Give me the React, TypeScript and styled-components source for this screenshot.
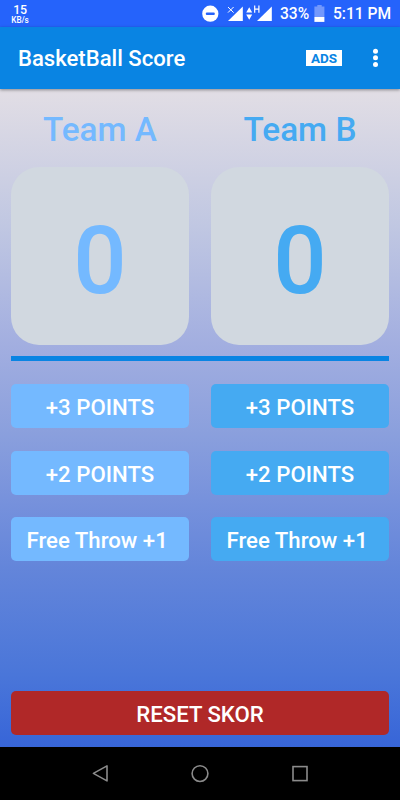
import React, { useState } from "react";
import styled, { createGlobalStyle } from "styled-components";

const GlobalStyle = createGlobalStyle`
  * { box-sizing: border-box; }
  body { margin: 0; background: #000; }
  button { font: inherit; border: 0; padding: 0; color: inherit; cursor: pointer; }
`;

const Screen = styled.div`
  width: 400px;
  height: 800px;
  display: flex;
  flex-direction: column;
  font-family: Roboto, sans-serif;
  font-weight: 500;
  color: #fff;
  overflow: hidden;
`;

const StatusBar = styled.header`
  height: 27px;
  flex: none;
  background: #2563fb;
  display: flex;
  align-items: center;
  justify-content: space-between;
  padding: 0 9px 0 11px;
`;

const NetSpeed = styled.div`
  width: 18px;
  display: flex;
  flex-direction: column;
  align-items: center;
`;

const SpeedValue = styled.span`
  font-size: 12.4px;
  line-height: 12px;
  letter-spacing: -0.3px;
`;

const SpeedUnit = styled.span`
  font-size: 8.2px;
  line-height: 8px;
  letter-spacing: -0.1px;
`;

const StatusRight = styled.div`
  display: flex;
  align-items: center;
  height: 27px;
`;

const Percent = styled.span`
  font-size: 15.6px;
  line-height: 27px;
  width: 34px;
  padding-top: 1px;
  white-space: nowrap;
`;

const Clock = styled.span`
  font-size: 15.6px;
  line-height: 27px;
  width: 58px;
  padding-top: 1px;
  white-space: nowrap;
`;

const Toolbar = styled.div`
  height: 62px;
  flex: none;
  background: #0984e3;
  display: flex;
  align-items: center;
  padding: 0 20px 0 18px;
  box-shadow: 0 1px 3px rgba(0, 0, 0, 0.4);
  z-index: 1;
`;

const Title = styled.h1`
  margin: 0;
  flex: 1;
  font-size: 22.1px;
  font-weight: 500;
  line-height: 26px;
`;

const AdsBadge = styled.button`
  width: 36px;
  height: 16px;
  margin: 0 29px 1px 0;
  background: #fff;
  color: #0984e3;
  font-size: 13.5px;
  font-weight: 700;
  line-height: 16px;
`;

const MenuButton = styled.button`
  display: flex;
  background: none;
`;

const Board = styled.main`
  height: 658px;
  flex: none;
  display: flex;
  flex-direction: column;
  padding: 23px 11px 12px;
  background: linear-gradient(
    180deg,
    #e2dee5 0%,
    #c0c7e2 21%,
    #a2aee0 39%,
    #8ba0dd 52%,
    #7691dc 63%,
    #6385da 73%,
    #4a76d9 89%,
    #3765d8 100%
  );
`;

const TeamRow = styled.div`
  display: grid;
  grid-template-columns: 178px 178px;
  column-gap: 22px;
`;

const TeamColumn = styled.section<{ $color: string }>`
  display: flex;
  flex-direction: column;
  color: ${(p) => p.$color};
`;

const TeamName = styled.h2`
  margin: 0 0 20px;
  height: 35px;
  font-size: 33.3px;
  line-height: 35px;
  font-weight: 500;
  text-align: center;
`;

const ScoreCard = styled.div`
  height: 178px;
  border-radius: 28px;
  background: #d1d8e0;
  display: flex;
  align-items: center;
  justify-content: center;
  padding-top: 10px;
  font-size: 94px;
  line-height: 110px;
`;

const Divider = styled.div`
  height: 5px;
  margin: 11px 0 23px;
  background: #0984e3;
`;

const ButtonGrid = styled.div`
  display: grid;
  grid-template-columns: 178px 178px;
  column-gap: 22px;
  row-gap: 22.5px;
`;

const ScoreButton = styled.button<{ $bg: string; $left?: boolean }>`
  height: 44px;
  border-radius: 5px;
  background: ${(p) => p.$bg};
  font-size: 22.2px;
  line-height: 46px;
  white-space: nowrap;
  text-align: ${(p) => (p.$left ? "left" : "center")};
  padding-left: ${(p) => (p.$left ? "15.5px" : "0")};
`;

const ResetButton = styled(ScoreButton)`
  margin-top: auto;
`;

const NavBar = styled.nav`
  flex: 1;
  background: #000;
  display: grid;
  grid-template-columns: repeat(3, 100px);
  justify-content: center;
  align-items: center;
  justify-items: center;
`;

const SignalIcons = () => (
  <svg width="78" height="27" viewBox="0 0 78 27" fill="#fff">
    <circle cx="8.3" cy="13.7" r="8.1" />
    <rect x="3.8" y="12.6" width="9" height="2.3" rx="1" fill="#2563fb" />
    <path d="M40.8 6.4V21H26z" />
    <path d="M26 7l5.6 5.6M31.6 7L26 12.6" stroke="#fff" strokeWidth="1" />
    <path d="M44.2 12.6L47.2 7.2l3 5.4zM44.2 14.4h6l-3 5.4z" />
    <path d="M69.8 6.4V21H55z" />
    <path d="M52.7 5.6v7.2M56.9 5.6v7.2M52.7 9.1h4.2" stroke="#fff" strokeWidth="1.2" />
  </svg>
);

const BatteryIcon = () => (
  <svg width="19" height="27" viewBox="0 0 19 27">
    <path d="M3.3 5h4.4v1.6h2.7V17H0.4V6.6h2.9z" fill="#7398fc" />
    <path d="M0.4 17h10v4.9h-10z" fill="#fff" />
  </svg>
);

const MoreIcon = () => (
  <svg width="9" height="22" viewBox="0 0 9 22" fill="#fff">
    <circle cx="4.5" cy="4.2" r="2.5" />
    <circle cx="4.5" cy="10.8" r="2.5" />
    <circle cx="4.5" cy="17.4" r="2.5" />
  </svg>
);

const NavIcon = ({ children }: { children: React.ReactNode }) => (
  <svg width="20" height="20" viewBox="0 0 20 20" fill="none" stroke="#8b8b8b" strokeWidth="1.6">
    {children}
  </svg>
);

const TEAM_A = "#74b9ff";
const TEAM_B = "#45aaf2";

export default function App() {
  const [scores, setScores] = useState({ a: 0, b: 0 });
  const add = (team: "a" | "b", n: number) =>
    setScores((s) => ({ ...s, [team]: s[team] + n }));

  return (
    <Screen>
      <GlobalStyle />
      <StatusBar>
        <NetSpeed>
          <SpeedValue>15</SpeedValue>
          <SpeedUnit>KB/s</SpeedUnit>
        </NetSpeed>
        <StatusRight>
          <SignalIcons />
          <Percent>33%</Percent>
          <BatteryIcon />
          <Clock>5:11 PM</Clock>
        </StatusRight>
      </StatusBar>
      <Toolbar>
        <Title>BasketBall Score</Title>
        <AdsBadge>ADS</AdsBadge>
        <MenuButton aria-label="More options">
          <MoreIcon />
        </MenuButton>
      </Toolbar>
      <Board>
        <TeamRow>
          <TeamColumn $color={TEAM_A}>
            <TeamName>Team A</TeamName>
            <ScoreCard>{scores.a}</ScoreCard>
          </TeamColumn>
          <TeamColumn $color={TEAM_B}>
            <TeamName>Team B</TeamName>
            <ScoreCard>{scores.b}</ScoreCard>
          </TeamColumn>
        </TeamRow>
        <Divider />
        <ButtonGrid>
          <ScoreButton $bg={TEAM_A} onClick={() => add("a", 3)}>+3 POINTS</ScoreButton>
          <ScoreButton $bg={TEAM_B} onClick={() => add("b", 3)}>+3 POINTS</ScoreButton>
          <ScoreButton $bg={TEAM_A} onClick={() => add("a", 2)}>+2 POINTS</ScoreButton>
          <ScoreButton $bg={TEAM_B} onClick={() => add("b", 2)}>+2 POINTS</ScoreButton>
          <ScoreButton $bg={TEAM_A} $left onClick={() => add("a", 1)}>Free Throw +1</ScoreButton>
          <ScoreButton $bg={TEAM_B} $left onClick={() => add("b", 1)}>Free Throw +1</ScoreButton>
        </ButtonGrid>
        <ResetButton $bg="#b02828" onClick={() => setScores({ a: 0, b: 0 })}>
          RESET SKOR
        </ResetButton>
      </Board>
      <NavBar>
        <NavIcon>
          <path d="M17 1.9v15L3.4 9.4z" strokeLinejoin="round" />
        </NavIcon>
        <NavIcon>
          <circle cx="10" cy="9.6" r="7.9" />
        </NavIcon>
        <NavIcon>
          <rect x="3" y="2.6" width="14" height="14" />
        </NavIcon>
      </NavBar>
    </Screen>
  );
}
